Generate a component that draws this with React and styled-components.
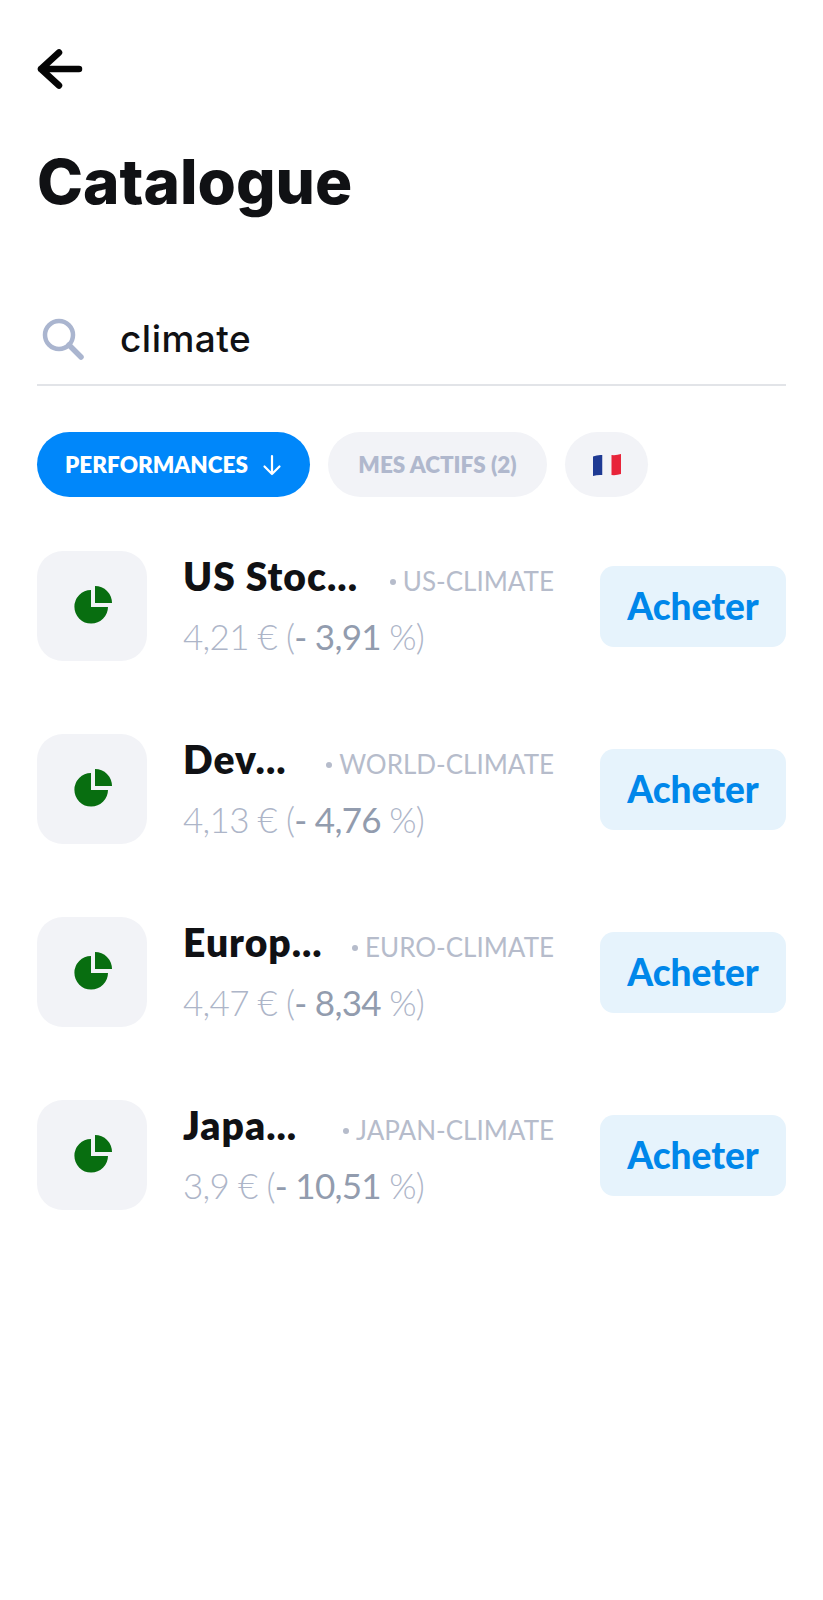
import React from 'react';
import styled, { createGlobalStyle } from 'styled-components';

const Global = createGlobalStyle`
  html, body { margin: 0; padding: 0; background: #fff; }
  * { box-sizing: border-box; }
`;

const Page = styled.main`
  width: 823px;
  height: 1600px;
  padding: 49px 37px 0;
  font-family: Lato, "Open Sans", sans-serif;
  overflow: hidden;
`;

const BackButton = styled.button`
  display: block;
  width: 46px;
  height: 40px;
  padding: 0;
  border: 0;
  background: none;
`;

const Title = styled.h1`
  margin: 56px 0 0;
  font-family: Inter, sans-serif;
  font-size: 62px;
  line-height: 74px;
  font-weight: 800;
  letter-spacing: 0;
  color: #101114;
`;

const SearchBar = styled.div`
  display: flex;
  align-items: center;
  gap: 36px;
  height: 79px;
  margin-top: 88px;
  padding-left: 5px;
  padding-bottom: 14px;
  border-bottom: 2px solid #e2e4e8;
`;

const SearchText = styled.span`
  font-family: Inter, sans-serif;
  font-size: 37px;
  font-weight: 500;
  letter-spacing: 0.5px;
  color: #101114;
`;

const Chips = styled.div`
  display: flex;
  gap: 18px;
  margin-top: 46px;
`;

const Chip = styled.div`
  display: flex;
  align-items: center;
  justify-content: center;
  gap: 14px;
  height: 65px;
  width: ${p => p.$width}px;
  border-radius: 33px;
  background: ${p => (p.$active ? '#0087fa' : '#f2f3f7')};
  color: ${p => (p.$active ? '#fff' : '#b0b8cd')};
  font-size: 22.5px;
  font-weight: 800;
`;

const List = styled.div`
  display: flex;
  flex-direction: column;
  gap: 73px;
  margin-top: 54px;
`;

const Row = styled.article`
  display: flex;
  align-items: center;
  height: 110px;
`;

const IconBox = styled.div`
  display: flex;
  align-items: center;
  justify-content: center;
  width: 110px;
  height: 110px;
  flex: none;
  border-radius: 26px;
  background: #f2f3f7;
`;

const Info = styled.div`
  flex: 1;
  margin: 0 46px 0 36px;
  display: flex;
  flex-direction: column;
  gap: 15px;
`;

const TopLine = styled.div`
  display: flex;
  align-items: baseline;
  justify-content: space-between;
`;

const Name = styled.span`
  font-size: 39px;
  line-height: 45px;
  font-weight: 800;
  letter-spacing: 1px;
  color: #101114;
`;

const Code = styled.span`
  font-size: 26px;
  color: #b6bccb;
`;

const Dot = styled.i`
  display: inline-block;
  width: 6px;
  height: 6px;
  margin-right: 7px;
  vertical-align: 6px;
  border-radius: 50%;
  background: #b6bccb;
`;

const Price = styled.div`
  font-size: 35px;
  line-height: 45px;
  font-weight: 300;
  letter-spacing: -0.7px;
  color: #adb5c8;
`;

const Change = styled.span`
  color: #929cae;
  font-weight: 400;
`;

const BuyButton = styled.button`
  width: 186px;
  height: 81px;
  flex: none;
  border: 0;
  border-radius: 14px;
  padding: 0 0 2px;
  background: #e6f3fc;
  color: #0087ea;
  font-family: Lato, sans-serif;
  font-size: 37px;
  font-weight: 900;
`;

const Arrow = () => (
  <svg width="46" height="40" viewBox="0 0 46 40" fill="none" stroke="#050505" strokeWidth="6.5" strokeLinecap="round" strokeLinejoin="round">
    <path d="M22 3.5 4 20l18 16.5M4 20h38" />
  </svg>
);

const SearchIcon = () => (
  <svg width="42" height="42" viewBox="0 0 42 42" fill="none" stroke="#aab5cf" strokeWidth="4.5" strokeLinecap="round">
    <circle cx="17" cy="17" r="14" />
    <path d="m27 27 12 12" strokeWidth="5.5" />
  </svg>
);

const DownArrow = () => (
  <svg width="20" height="22" viewBox="0 0 20 22" fill="none" stroke="#fff" strokeWidth="2.2" strokeLinecap="round" strokeLinejoin="round">
    <path d="M10 2v18M2.5 12.5 10 20l7.500-7.500" />
  </svg>
);

const Flag = () => (
  <svg width="28" height="22" viewBox="0 0 28 22">
    <path d="M0 2.500Q4.500 0.500 9.500 1V21Q4.500 20.500 0 22Z" fill="#1f3a93" />
    <path d="M9.500 1H18.500V21H9.500Z" fill="#f3f3f6" />
    <path d="M18.500 1Q23.500 1.500 28 0V20Q23.500 21.500 18.500 21Z" fill="#e8243a" />
  </svg>
);

const Pie = () => (
  <svg width="40" height="40" viewBox="-2.500 0.500 40 40" fill="#086e10">
    <path d="M16.500 4.500V21.500H33.500A16.800 16.800 0 1 1 16.500 4.500Z" />
    <path d="M20.500 0.500A17 17 0 0 1 37.500 17.500H20.500Z" />
  </svg>
);

const assets = [
  { name: 'US Stoc...', code: 'US-CLIMATE', price: '4,21 €', change: '- 3,91 ' },
  { name: 'Dev...', code: 'WORLD-CLIMATE', price: '4,13 €', change: '- 4,76 ' },
  { name: 'Europ...', code: 'EURO-CLIMATE', price: '4,47 €', change: '- 8,34 ' },
  { name: 'Japa...', code: 'JAPAN-CLIMATE', price: '3,9 €', change: '- 10,51 ' },
];

export default function App() {
  return (
    <Page>
      <Global />
      <BackButton aria-label="Retour"><Arrow /></BackButton>
      <Title>Catalogue</Title>
      <SearchBar>
        <SearchIcon />
        <SearchText>climate</SearchText>
      </SearchBar>
      <Chips>
        <Chip $active $width={273}>PERFORMANCES <DownArrow /></Chip>
        <Chip $width={219}>MES ACTIFS (2)</Chip>
        <Chip $width={83}><Flag /></Chip>
      </Chips>
      <List>
        {assets.map(a => (
          <Row key={a.code}>
            <IconBox><Pie /></IconBox>
            <Info>
              <TopLine>
                <Name>{a.name}</Name>
                <Code><Dot />{a.code}</Code>
              </TopLine>
              <Price>{a.price} (<Change>{a.change}</Change>%)</Price>
            </Info>
            <BuyButton>Acheter</BuyButton>
          </Row>
        ))}
      </List>
    </Page>
  );
}
